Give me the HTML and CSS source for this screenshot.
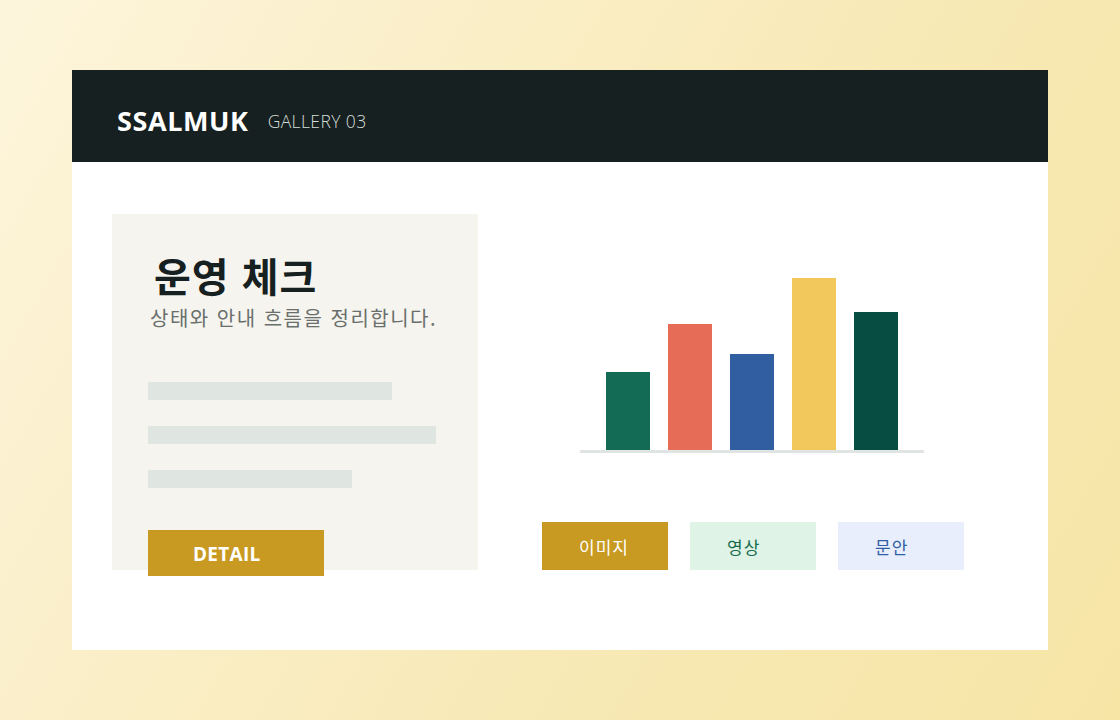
FILE: index.html
```html
<!DOCTYPE html>
<html lang="ko">
<head>
  <meta charset="UTF-8" />
  <meta name="viewport" content="width=device-width, initial-scale=1.0"/>
  <title>SSALMUK Gallery 03</title>
  <link rel="stylesheet" href="styles.css">
</head>
<body>

  <div class="card">
    <!-- Top bar -->
    <header class="topbar">
      <span class="brand">SSALMUK</span>
      <span class="sub">GALLERY 03</span>
    </header>

    <div class="content">
      <!-- Summary panel -->
      <section class="panel">
        <h1>운영 체크</h1>
        <p class="lead">상태와 안내 흐름을 정리합니다.</p>

        <div class="lines">
          <div class="line" style="width: 244px;"></div>
          <div class="line" style="width: 288px;"></div>
          <div class="line" style="width: 204px;"></div>
        </div>

        <button class="detail">DETAIL</button>
      </section>

      <!-- Chart and tabs -->
      <section class="side">
        <div class="chart">
          <div class="bar green" style="height: 78px;"></div>
          <div class="bar coral" style="height: 126px;"></div>
          <div class="bar blue" style="height: 96px;"></div>
          <div class="bar yellow" style="height: 172px;"></div>
          <div class="bar dark" style="height: 138px;"></div>
        </div>

        <div class="tabs">
          <button class="tab tab-gold">이미지</button>
          <button class="tab tab-mint">영상</button>
          <button class="tab tab-sky">문안</button>
        </div>
      </section>
    </div>
  </div>

</body>
</html>
```

FILE: styles.css
```css
body {
  margin: 0;
  height: 720px;
  padding: 70px 72px;
  box-sizing: border-box;
  background: linear-gradient(120deg, #fdf5dc 0%, #f8eab9 55%, #f6e5a5 100%);
  font-family: "Noto Sans CJK KR", "Open Sans", sans-serif;
  overflow: hidden;
}

.card {
  background: #fff;
  height: 580px;
}

.topbar {
  height: 92px;
  background: #172020;
  display: flex;
  align-items: center;
  padding-left: 45px;
  padding-top: 9px;
  box-sizing: border-box;
}

.brand {
  font-family: "Open Sans", sans-serif;
  font-weight: 700;
  font-size: 27px;
  letter-spacing: 0.6px;
  color: #fff;
}

.sub {
  font-family: "Open Sans", sans-serif;
  font-weight: 300;
  font-size: 17.5px;
  letter-spacing: 0.4px;
  color: #d5dfda;
  margin-left: 19px;
  padding-top: 1px;
}

.content {
  display: flex;
  gap: 18px;
  padding: 52px 40px 0;
}

.panel {
  width: 366px;
  height: 356px;
  flex-shrink: 0;
  background: #f5f4ef;
  padding: 35px 0 0 36px;
  box-sizing: border-box;
}

.panel h1 {
  margin: 0 0 0 6px;
  font-size: 40px;
  line-height: 52px;
  letter-spacing: 1px;
  font-weight: 700;
  color: #172020;
}

.lead {
  margin: 3px 0 0 2px;
  font-size: 20px;
  line-height: 28px;
  letter-spacing: 1.5px;
  color: #6a6f6c;
}

.lines {
  display: flex;
  flex-direction: column;
  gap: 26px;
  margin-top: 50px;
}

.line {
  height: 18px;
  background: #dfe5e0;
}

.detail {
  margin-top: 42px;
  width: 176px;
  height: 46px;
  border: none;
  background: #c89a22;
  color: #fff;
  font-family: "Open Sans", sans-serif;
  font-weight: 700;
  font-size: 19px;
  letter-spacing: 0.3px;
  text-align: left;
  padding: 2px 0 0 45px;
}

.side {
  flex: 1;
  display: flex;
  flex-direction: column;
  align-items: center;
}

.chart {
  margin-top: 64px;
  width: 292px;
  height: 172px;
  display: flex;
  align-items: flex-end;
  gap: 18px;
  padding: 0 26px;
  border-bottom: 3px solid #e0e4e2;
}

.bar {
  width: 44px;
  flex-shrink: 0;
}

.green { background: #136b55; }
.coral { background: #e66c57; }
.blue { background: #305ea1; }
.yellow { background: #f2c85c; }
.dark { background: #074d41; }

.tabs {
  display: flex;
  gap: 22px;
  margin-top: 69px;
  margin-left: 2px;
}

.tab {
  width: 126px;
  height: 48px;
  border: none;
  font-family: "Noto Sans CJK KR", sans-serif;
  font-size: 17px;
  font-weight: 400;
  letter-spacing: 1px;
  text-align: left;
  padding: 0 0 0 37px;
}

.tab-gold { background: #c89a22; color: #fff; }
.tab-mint { background: #dff3e7; color: #176c4d; }
.tab-sky { background: #e8eefb; color: #2f5ea6; }
```
